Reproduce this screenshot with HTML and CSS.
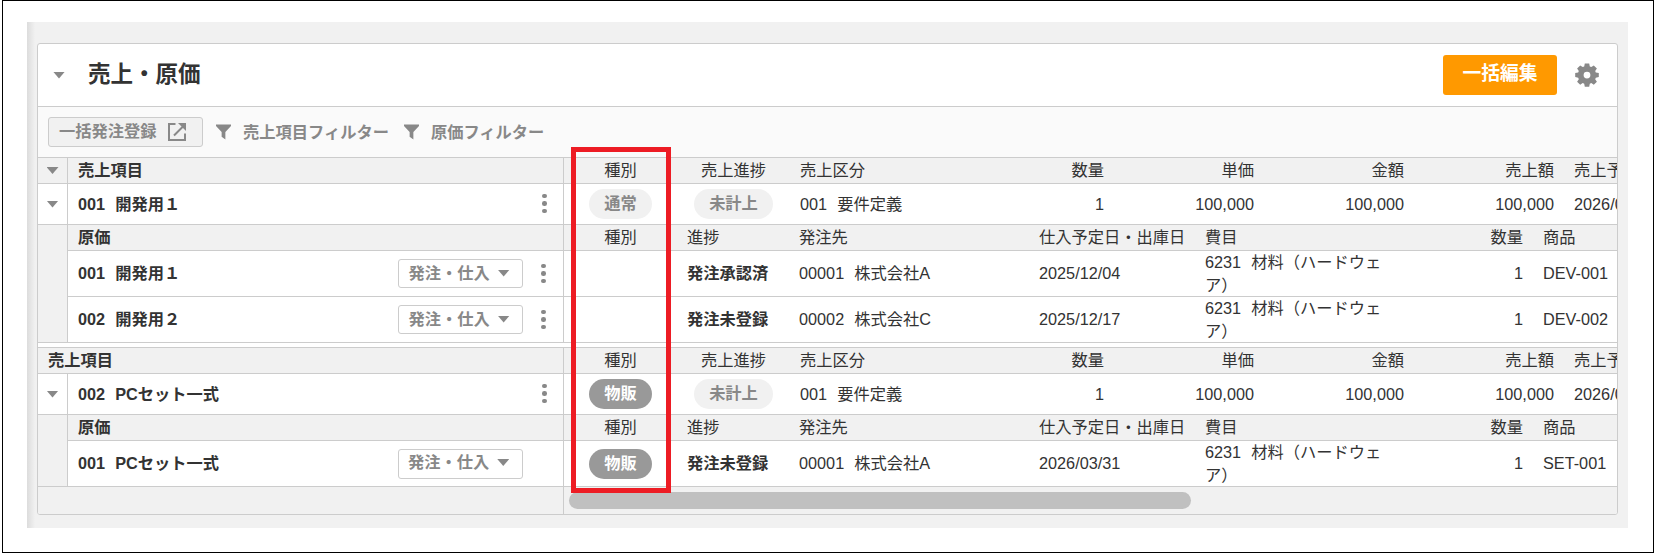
FILE: index.html
```html
<!DOCTYPE html>
<html lang="ja">
<head>
    <meta charset="UTF-8">
    <meta name="viewport" content="width=device-width, initial-scale=1.0">
    <title>売上・原価</title>
    <link rel="stylesheet" href="styles.css">
</head>
<body>
<div class="frame">
    <div class="page">
        <section class="panel">
            <header class="panel-header">
                <span class="arrow"></span>
                <h1>売上・原価</h1>
                <button class="btn-edit">一括編集</button>
                <svg class="gear" viewBox="0 0 24 24"><path fill-rule="evenodd" d="M9.8 0.5h4.4l.6 3 1.5.6 2.5-1.7 3.1 3.1-1.7 2.5.6 1.5 3 .6v4l-3 .6-.6 1.5 1.7 2.5-3.1 3.1-2.5-1.7-1.5.6-.6 3H9.8l-.6-3-1.5-.6-2.5 1.7-3.1-3.1 1.7-2.5-.6-1.5-3-.6v-4l3-.6.6-1.5L2.1 5.5l3.1-3.1 2.5 1.700 1.500-.6zM12 8.700a3.400 3.400 0 1 0 0 6.800 3.400 3.400 0 0 0 0-6.800z"/></svg>
            </header>

            <div class="toolbar">
                <button class="btn-order">一括発注登録
                    <svg class="icon-open" viewBox="0 0 20 20"><path d="M8.500 2H2v16h16v-6.500M7 13.500L16 4.500"/><path class="tip" d="M11 1h8v8z"/></svg>
                </button>
                <a class="filter"><svg class="funnel" viewBox="0 0 16 16"><path d="M0 0h16v1.500L10 8v8L6 13V8L0 1.500z"/></svg>売上項目フィルター</a>
                <a class="filter"><svg class="funnel" viewBox="0 0 16 16"><path d="M0 0h16v1.500L10 8v8L6 13V8L0 1.500z"/></svg>原価フィルター</a>
            </div>

            <div class="table">
                <!-- 固定列 -->
                <div class="fixed">
                    <div class="row head"><div class="toggle"><span class="arrow"></span></div><div class="name">売上項目</div></div>
                    <div class="row sale"><div class="toggle"><span class="arrow"></span></div><div class="name">001&nbsp; 開発用１</div><span class="kebab"><i></i><i></i><i></i></span></div>
                    <div class="row head"><div class="toggle indent"></div><div class="name">原価</div></div>
                    <div class="row cost"><div class="toggle indent"></div><div class="name">001&nbsp; 開発用１</div><button class="btn-menu">発注・仕入<span class="arrow"></span></button><span class="kebab"><i></i><i></i><i></i></span></div>
                    <div class="row cost"><div class="toggle indent"></div><div class="name">002&nbsp; 開発用２</div><button class="btn-menu">発注・仕入<span class="arrow"></span></button><span class="kebab"><i></i><i></i><i></i></span></div>
                    <div class="row gap"></div>
                    <div class="row head"><div class="name">売上項目</div></div>
                    <div class="row sale"><div class="toggle"><span class="arrow"></span></div><div class="name">002&nbsp; PCセット一式</div><span class="kebab"><i></i><i></i><i></i></span></div>
                    <div class="row head"><div class="toggle indent"></div><div class="name">原価</div></div>
                    <div class="row cost"><div class="toggle indent"></div><div class="name">001&nbsp; PCセット一式</div><button class="btn-menu last">発注・仕入<span class="arrow"></span></button></div>
                    <div class="row foot"></div>
                </div>

                <!-- 横スクロール列 -->
                <div class="scroll">
                    <div class="row head sale-cols"><div class="center">種別</div><div class="center">売上進捗</div><div>売上区分</div><div class="num">数量</div><div class="num">単価</div><div class="num">金額</div><div class="num">売上額</div><div>売上予定日</div></div>
                    <div class="row sale sale-cols"><div class="center"><span class="pill">通常</span></div><div class="center"><span class="pill">未計上</span></div><div>001&nbsp; 要件定義</div><div class="num">1</div><div class="num">100,000</div><div class="num">100,000</div><div class="num">100,000</div><div>2026/03/31</div></div>
                    <div class="row head cost-cols"><div class="center">種別</div><div>進捗</div><div>発注先</div><div>仕入予定日・出庫日</div><div>費目</div><div class="num">数量</div><div>商品</div></div>
                    <div class="row cost cost-cols"><div></div><div class="status">発注承認済</div><div>00001&nbsp; 株式会社A</div><div>2025/12/04</div><div class="wrap">6231&nbsp; 材料（ハードウェア）</div><div class="num">1</div><div>DEV-001</div></div>
                    <div class="row cost cost-cols"><div></div><div class="status">発注未登録</div><div>00002&nbsp; 株式会社C</div><div>2025/12/17</div><div class="wrap">6231&nbsp; 材料（ハードウェア）</div><div class="num">1</div><div>DEV-002</div></div>
                    <div class="row gap"></div>
                    <div class="row head sale-cols"><div class="center">種別</div><div class="center">売上進捗</div><div>売上区分</div><div class="num">数量</div><div class="num">単価</div><div class="num">金額</div><div class="num">売上額</div><div>売上予定日</div></div>
                    <div class="row sale sale-cols"><div class="center"><span class="pill goods">物販</span></div><div class="center"><span class="pill">未計上</span></div><div>001&nbsp; 要件定義</div><div class="num">1</div><div class="num">100,000</div><div class="num">100,000</div><div class="num">100,000</div><div>2026/03/31</div></div>
                    <div class="row head cost-cols"><div class="center">種別</div><div>進捗</div><div>発注先</div><div>仕入予定日・出庫日</div><div>費目</div><div class="num">数量</div><div>商品</div></div>
                    <div class="row cost cost-cols"><div class="center"><span class="pill goods">物販</span></div><div class="status">発注未登録</div><div>00001&nbsp; 株式会社A</div><div>2026/03/31</div><div class="wrap">6231&nbsp; 材料（ハードウェア）</div><div class="num">1</div><div>SET-001</div></div>
                    <div class="row foot"><div class="thumb"></div></div>
                </div>
                <div class="highlight"></div>
            </div>
        </section>
    </div>
</div>
</body>
</html>
```
FILE: styles.css
```css
* {
    box-sizing: border-box;
}
body {
    margin: 0;
    background: #fff;
    color: #333;
    font-family: "Liberation Sans", "Noto Sans CJK JP", sans-serif;
    font-size: 16.25px;
    line-height: 22.5px;
}
button {
    font: inherit;
    font-weight: bold;
    cursor: pointer;
    white-space: nowrap;
}
.frame {
    width: 1652px;
    height: 553px;
    margin-left: 2px;
    padding: 21px 24px 0;
    border: 1px solid #000;
}
.page {
    width: 1601px;
    height: 506px;
    padding: 21px 10px 0;
    background: linear-gradient(to right, #dcdcdc, #f1f1f1 8px);
}
.panel {
    width: 1581px;
    border: 1px solid #ccc;
    border-radius: 3px;
    overflow: hidden;
    background: #fff;
}
.panel-header {
    display: flex;
    align-items: center;
    height: 62px;
    padding: 0 18px 0 15px;
}
.panel-header h1 {
    margin: 0 auto 0 23px;
    font-size: 22.5px;
    line-height: 30px;
    padding-bottom: 1px;
}
.arrow {
    width: 12px;
    height: 7px;
    background: #888;
    clip-path: polygon(0 0, 100% 0, 50% 100%);
}
.btn-edit {
    width: 114px;
    height: 40px;
    margin-right: 18px;
    padding: 0 0 1px;
    border: none;
    border-radius: 3px;
    background: #ff9900;
    color: #fff;
    font-size: 18.75px;
}
.gear {
    width: 24px;
    height: 24px;
    fill: #888;
}
.toolbar {
    display: flex;
    align-items: center;
    height: 51px;
    padding: 0 10px;
    border-top: 1px solid #ccc;
    background: #fafafa;
    color: #888;
    font-weight: bold;
}
.btn-order {
    display: flex;
    align-items: center;
    width: 155px;
    height: 30px;
    padding: 0 0 1px 10px;
    border: 1px solid #ccc;
    border-radius: 3px;
    background: #f1f1f1;
    color: #888;
}
.icon-open {
    width: 20px;
    height: 20px;
    margin-left: 10px;
    fill: none;
    stroke: #888;
    stroke-width: 2;
}
.icon-open .tip {
    fill: #888;
    stroke: none;
}
.filter {
    display: flex;
    align-items: center;
    margin-left: 13px;
}
.filter + .filter {
    margin-left: 15px;
}
.funnel {
    width: 15px;
    height: 16px;
    margin-right: 12px;
    fill: #888;
}

/* 表 */
.table {
    display: flex;
    position: relative;
    word-spacing: 0.5px;
}
.fixed {
    width: 526px;
    flex: none;
}
.scroll {
    flex: 1;
    min-width: 0;
    overflow: hidden;
}
.row {
    border-top: 1px solid #ccc;
    white-space: nowrap;
}
.fixed .row {
    display: flex;
    align-items: center;
    border-right: 1px solid #ccc;
    font-weight: bold;
}
.head {
    height: 26px;
    background: #f1f1f1;
}
.sale {
    height: 41px;
}
.cost {
    height: 46px;
}
.fixed .row.gap {
    border-right: none;
}
.gap {
    height: 5px;
}
.foot {
    height: 28px;
    padding: 5px;
    background: #f1f1f1;
}
.toggle {
    display: flex;
    align-items: center;
    justify-content: center;
    align-self: stretch;
    width: 30px;
    border-right: 1px solid #ccc;
}
.toggle.indent {
    margin-top: -1px;
    background: #f1f1f1;
}
.sale + .head .toggle.indent {
    margin-top: 0;
}
.name {
    flex: 1;
    padding-left: 10px;
}
.kebab {
    display: flex;
    flex-direction: column;
    gap: 3px;
    margin: -1px 16px 0 0;
}
.cost .kebab {
    margin: 0 17px 0 0;
}
.kebab i {
    width: 4.6px;
    height: 4.6px;
    border-radius: 50%;
    background: #888;
}
.btn-menu {
    display: flex;
    align-items: center;
    width: 125px;
    height: 29px;
    margin-right: 18px;
    padding: 0 0 1px 9px;
    border: 1px solid #ccc;
    border-radius: 3px;
    background: #fff;
    color: #888;
}
.btn-menu .arrow {
    margin-left: 8px;
}
.btn-menu.last {
    height: 30px;
    margin-right: 40px;
    padding-bottom: 2px;
}
.sale-cols {
    display: grid;
    grid-template-columns: 113px 113px 174px 150px 150px 150px 150px 150px;
    align-items: center;
}
.cost-cols {
    display: grid;
    grid-template-columns: 113px 112px 240px 166px 200px 138px 150px;
    align-items: center;
}
.scroll .row > div {
    padding: 0 10px;
}
.scroll .center {
    text-align: center;
}
.num {
    text-align: right;
}
.wrap {
    white-space: normal;
}
.status {
    font-weight: bold;
}
.pill {
    display: inline-block;
    height: 30px;
    margin: 0 -5px;
    padding: 0 15px;
    border-radius: 15px;
    background: #f1f1f1;
    color: #888;
    font-weight: bold;
    line-height: 29px;
    vertical-align: top;
}
.pill.goods {
    background: #999;
    color: #fff;
}
.thumb {
    width: 622px;
    height: 17px;
    border-radius: 9px;
    background: #c0c0c0;
}

/* 種別列の強調枠 */
.highlight {
    position: absolute;
    top: -10px;
    left: 533px;
    width: 100px;
    height: 346px;
    border: 5px solid #ed1c24;
}
```
